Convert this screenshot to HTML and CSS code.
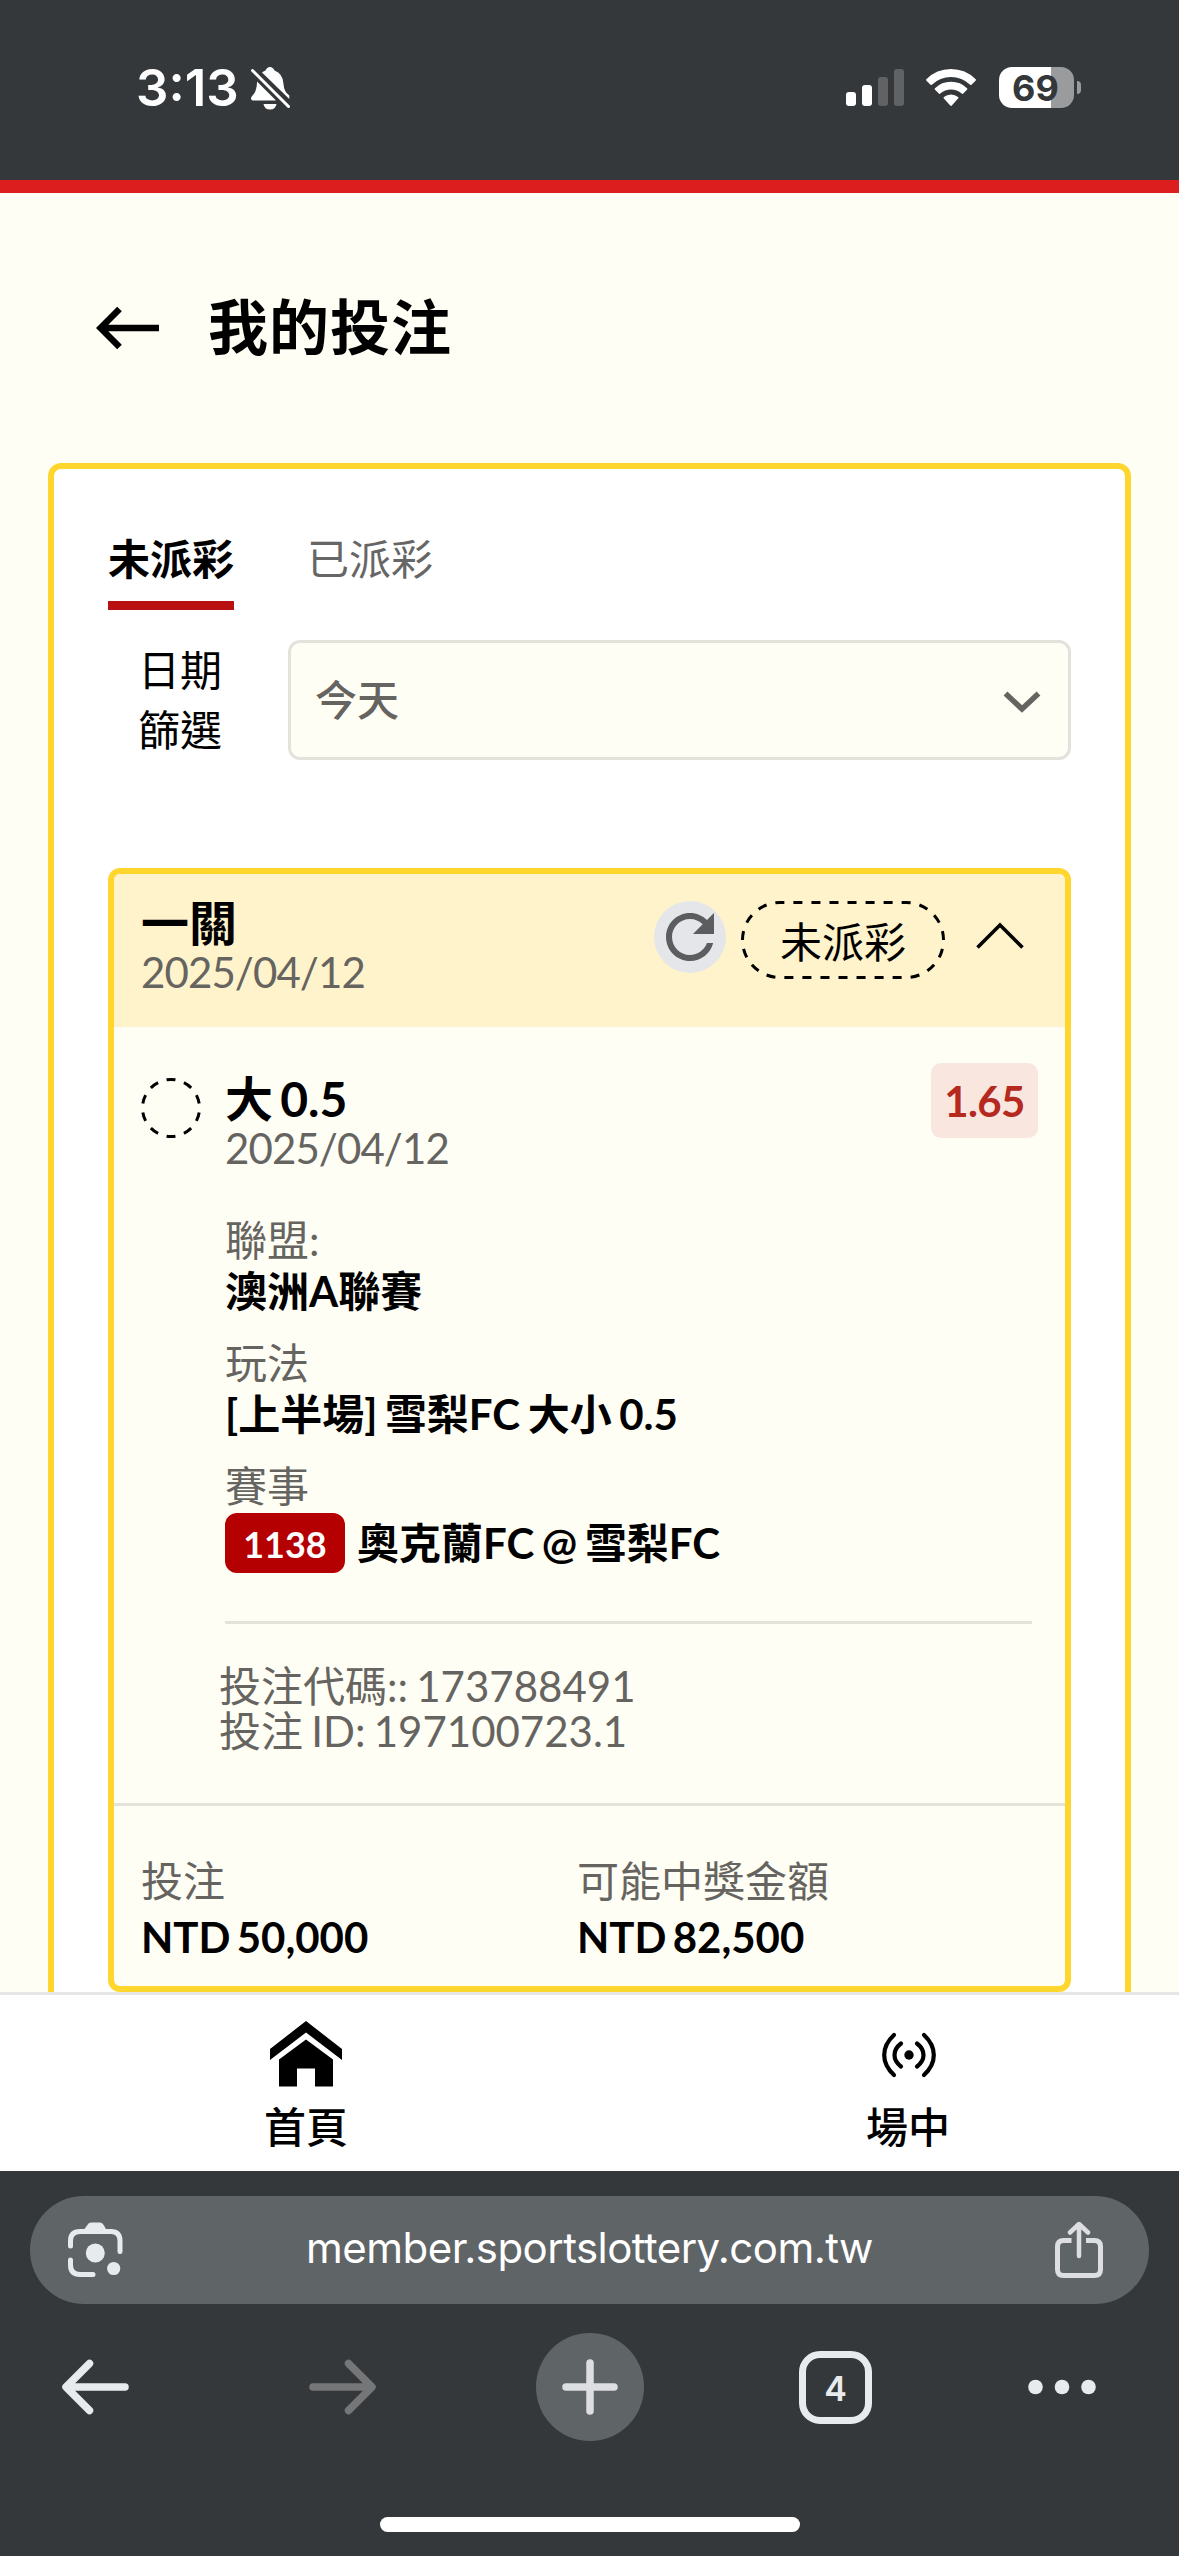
FILE: index.html
```html
<!DOCTYPE html>
<html lang="zh-Hant">
<head>
<meta charset="utf-8">
<title>我的投注</title>
<link rel="stylesheet" href="styles.css">
</head>
<body>
<div class="status-bar">
  <span class="clock">3:13</span>
  <svg class="bell" width="42" height="46" viewBox="0 0 42 46">
    <path fill="#fff" d="M7 17 L7 15.500 L26 34.500 L3 34.500 Q1 34.500 1 32.500 Q1 31 2.500 29.500 Q6.500 26 7 17Z"/>
    <path fill="#fff" d="M12 6.500 Q14 5 15.500 4.500 Q17 1 20 1 Q23 1 24.500 4.500 Q33 7.500 33.500 18 Q34 26 39.300 29.500 V33 Z"/>
    <path fill="#fff" d="M13.500 38 H26.500 Q25.500 43.500 20 43.500 Q14.500 43.500 13.500 38Z"/>
    <path stroke="#fff" stroke-width="3" stroke-linecap="round" d="M2.500 4.500 L38.500 40.500"/>
  </svg>
  <div class="status-icons">
    <svg class="signal" width="60" height="38" viewBox="0 0 60 38">
      <rect x="1" y="23" width="10" height="14" rx="3" fill="#fff"/>
      <rect x="17" y="16" width="10" height="21" rx="3" fill="#fff"/>
      <rect x="33" y="8" width="10" height="29" rx="3" fill="#606264"/>
      <rect x="49" y="0" width="10" height="37" rx="3" fill="#606264"/>
    </svg>
    <svg class="wifi" width="52" height="38" viewBox="0 0 52 38">
      <path fill="#fff" d="M1.200 11.500 Q0.800 10.800 1.300 10.200 Q11.500 0 26 0 Q40.500 0 50.700 10.200 Q51.200 10.800 50.800 11.500 L46.500 15.800 Q45.900 16.300 45.200 15.800 Q37 8 26 8 Q15 8 6.800 15.800 Q6.100 16.300 5.500 15.800Z"/>
      <path fill="#fff" d="M9.800 20.500 Q9.400 19.800 10 19.200 Q16.500 12.800 26 12.800 Q35.500 12.800 42 19.200 Q42.600 19.800 42.200 20.500 L38 24.700 Q37.300 25.100 36.700 24.600 Q32 20.500 26 20.500 Q20 20.500 15.300 24.600 Q14.700 25.100 14 24.700Z"/>
      <path fill="#fff" d="M18.700 29.300 Q18.300 28.600 18.900 28.100 Q22 25.500 26 25.500 Q30 25.500 33.100 28.100 Q33.700 28.600 33.300 29.300 L26.800 36.500 Q26 37.300 25.200 36.500Z"/>
    </svg>
    <div class="battery"><span class="battery-body">69</span><span class="battery-cap"></span></div>
  </div>
</div>

<main class="page">
  <header class="page-header">
    <svg width="64" height="44" viewBox="0 0 64 44">
      <path fill="none" stroke="#000" stroke-width="6.500" d="M63 22 H5 M23.500 3 L4.500 22 L23.500 41"/>
    </svg>
    <h1>我的投注</h1>
  </header>

  <section class="panel">
    <nav class="tabs">
      <a class="tab tab-active">未派彩</a>
      <a class="tab">已派彩</a>
    </nav>
    <div class="filter">
      <label class="filter-label">日期<br>篩選</label>
      <div class="select">
        <span>今天</span>
        <svg width="40" height="26" viewBox="0 0 40 26">
          <path fill="none" stroke="#666460" stroke-width="5.500" d="M3.500 6.500 L20 22 L36.500 6.500"/>
        </svg>
      </div>
    </div>

    <article class="ticket">
      <header class="ticket-header">
        <div class="ticket-title">
          <h2>一關</h2>
          <p class="date">2025/04/12</p>
        </div>
        <div class="ticket-actions">
          <span class="refresh">
            <svg width="72" height="72" viewBox="0 0 24 24">
              <path fill="#5c5d5e" d="M17.650 6.350C16.200 4.900 14.210 4 12 4c-4.420 0-7.990 3.580-7.990 8s3.570 8 7.990 8c3.730 0 6.840-2.550 7.730-6h-2.080c-.82 2.330-3.040 4-5.650 4-3.310 0-6-2.690-6-6s2.690-6 6-6c1.660 0 3.140.69 4.220 1.780L13 11h7V4l-2.350 2.350z"/>
            </svg>
          </span>
          <span class="status-pill">
            <svg class="pill-outline" width="204" height="78" viewBox="0 0 204 78">
              <path fill="none" stroke="#000" stroke-width="3" pathLength="27" stroke-dasharray=".5 .5" stroke-dashoffset="-.25" d="M102 1.500 H165 A37.500 37.500 0 0 1 165 76.500 H39 A37.500 37.500 0 0 1 39 1.500 Z"/>
            </svg>
            未派彩
          </span>
          <svg class="collapse" width="48" height="28" viewBox="0 0 48 28">
            <path fill="none" stroke="#000" stroke-width="3.600" d="M1.500 25.500 L24 3 L46.500 25.500"/>
          </svg>
        </div>
      </header>

      <div class="leg">
        <svg class="leg-status" width="60" height="60" viewBox="0 0 60 60">
          <path fill="none" stroke="#000" stroke-width="3" pathLength="10" stroke-dasharray=".5 .5" stroke-dashoffset=".25" d="M30 1.500 A28.500 28.500 0 0 1 30 58.500 A28.500 28.500 0 0 1 30 1.500"/>
        </svg>
        <div class="leg-body">
          <div class="leg-top">
            <div>
              <h3>大 0.5</h3>
              <p class="date">2025/04/12</p>
            </div>
            <span class="odds">1.65</span>
          </div>
          <dl class="details">
            <dt>聯盟:</dt>
            <dd>澳洲A聯賽</dd>
            <dt>玩法</dt>
            <dd>[上半場] 雪梨FC 大小 0.5</dd>
            <dt>賽事</dt>
            <dd class="match"><span class="match-code">1138</span>奧克蘭FC @ 雪梨FC</dd>
          </dl>
          <div class="meta">
            <p>投注代碼:: 173788491</p>
            <p>投注 ID: 197100723.1</p>
          </div>
        </div>
      </div>

      <footer class="totals">
        <div>
          <p class="total-label">投注</p>
          <p class="total-value">NTD 50,000</p>
        </div>
        <div>
          <p class="total-label">可能中獎金額</p>
          <p class="total-value">NTD 82,500</p>
        </div>
      </footer>
    </article>
  </section>
</main>

<nav class="site-nav">
  <a class="site-nav-item">
    <svg width="72" height="72" viewBox="0 0 72 72">
      <path d="M36 3 L72 31 V42 L36 14.500 L0 42 V31Z"/>
      <path d="M36 21.500 L63 41.500 V68.500 H45 V50.500 H27 V68.500 H9 V41.500Z"/>
    </svg>
    <span>首頁</span>
  </a>
  <a class="site-nav-item">
    <svg width="72" height="72" viewBox="0 0 72 72">
      <circle cx="37" cy="37" r="4.700"/>
      <path fill="none" stroke="#000" stroke-width="4.200" stroke-linecap="round" d="M22 17 Q12.200 26 12.200 37 Q12.200 48 22 57 M52 17 Q61.800 26 61.800 37 Q61.800 48 52 57 M29 25.500 Q22.500 30.500 22.500 37 Q22.500 43.500 29 48.500 M45 25.500 Q51.500 30.500 51.500 37 Q51.500 43.500 45 48.500"/>
    </svg>
    <span>場中</span>
  </a>
</nav>

<div class="browser">
  <div class="address-bar">
    <svg width="56" height="56" viewBox="0 0 56 56">
      <g fill="none" stroke="#e8ebed" stroke-width="5" stroke-linecap="round">
        <path d="M2.500 24 V19 Q2.500 9.500 12 9.500 H43 Q52 9.500 52 19 V29.500"/>
        <path d="M2.500 38 V43 Q2.500 52.500 12 52.500 H25"/>
      </g>
      <g fill="#e8ebed">
        <path d="M15 9 L19 3.500 Q20.500 .5 23 .5 H32 Q34.500 .5 36 3.500 L39 9Z"/>
        <circle cx="27.300" cy="31" r="9.500"/>
        <circle cx="45.700" cy="46.500" r="6.600"/>
      </g>
    </svg>
    <span class="url">member.sportslottery.com.tw</span>
    <svg width="48" height="58" viewBox="0 0 48 58">
      <path fill="none" stroke="#dcdee2" stroke-width="5" d="M16.500 19.500 H8.500 Q2.500 19.500 2.500 25.500 V48.500 Q2.500 54.500 8.500 54.500 H39.500 Q45.500 54.500 45.500 48.500 V25.500 Q45.500 19.500 39.500 19.500 H31"/>
      <path fill="none" stroke="#dcdee2" stroke-width="4.500" stroke-linecap="round" stroke-linejoin="round" d="M24 35 V4 M15 11.500 L24 3 L33 11.500"/>
    </svg>
  </div>
  <div class="toolbar">
    <svg width="68" height="56" viewBox="0 0 68 56">
      <path fill="none" stroke="#e8ebed" stroke-width="7.500" stroke-linecap="round" stroke-linejoin="round" d="M63 28 H5 M27.500 4.500 L4 28 L27.500 51.500"/>
    </svg>
    <svg width="68" height="56" viewBox="0 0 68 56">
      <path fill="none" stroke="#757678" stroke-width="7.500" stroke-linecap="round" stroke-linejoin="round" d="M5 28 H63 M40.500 4.500 L64 28 L40.500 51.500"/>
    </svg>
    <span class="new-tab">
      <svg width="56" height="56" viewBox="0 0 56 56">
        <path stroke="#dcdee2" stroke-width="7.500" stroke-linecap="round" d="M28 4 V52 M4 28 H52"/>
      </svg>
    </span>
    <span class="tab-count">4</span>
    <svg width="68" height="16" viewBox="0 0 68 16">
      <g fill="#e8ebed"><circle cx="7.500" cy="8" r="7.300"/><circle cx="34" cy="8" r="7.300"/><circle cx="60.500" cy="8" r="7.300"/></g>
    </svg>
  </div>
  <div class="home-indicator"></div>
</div>
</body>
</html>
```
FILE: styles.css
```css
* {
  box-sizing: border-box;
  margin: 0;
  padding: 0;
}

body {
  width: 1179px;
  height: 2556px;
  overflow: hidden;
  display: flex;
  flex-direction: column;
  background: #fffef5;
  color: #000;
  font-family: Lato, "Noto Sans CJK TC", sans-serif;
  font-size: 42px;
  line-height: 42px;
  word-spacing: -2.5px;
}

svg {
  display: block;
  flex: none;
}

/* Phone status bar */
.status-bar {
  flex: none;
  height: 193px;
  padding: 66px 98px 0 136px;
  display: flex;
  align-items: flex-start;
  background: #34383a;
  border-bottom: 13px solid #dc1e1e;
  color: #fff;
  font-family: Inter, sans-serif;
}

.clock {
  width: 114px;
  font-size: 51px;
  font-weight: 600;
  line-height: 44px;
}

.status-icons {
  margin-left: auto;
  padding-top: 1px;
  display: flex;
}

.signal {
  margin: 2px 20px 0 0;
}

.wifi {
  margin: 2px 22px 0 0;
}

.battery {
  display: flex;
  align-items: center;
  gap: 3px;
}

.battery-body {
  width: 75px;
  height: 41px;
  border-radius: 13px;
  background: linear-gradient(to right, #fff 52px, #9a9b9d 52px);
  color: #34383a;
  font-size: 36px;
  font-weight: 700;
  line-height: 42px;
  text-align: center;
  padding-right: 2px;
}

.battery-cap {
  width: 4px;
  height: 13px;
  border-radius: 0 4px 4px 0;
  background: #9a9b9d;
}

/* Page */
.page {
  height: 1799px;
  flex: none;
  overflow: hidden;
}

.page-header {
  height: 270px;
  padding-left: 96px;
  display: flex;
  align-items: center;
  gap: 48px;
}

.page-header h1 {
  padding-bottom: 3px;
  font-size: 60px;
  font-weight: 600;
  line-height: 60px;
  letter-spacing: 1px;
}

.panel {
  height: 1600px;
  margin: 0 48px;
  padding: 72px 54px 0;
  border: 6px solid #ffd62e;
  border-radius: 13px;
  background: #fff;
}

.tabs {
  display: flex;
  gap: 73px;
}

.tab {
  height: 69px;
  line-height: 36px;
  color: #666;
}

.tab-active {
  border-bottom: 9px solid #b91012;
  color: #000;
  font-weight: 600;
}

.filter {
  margin-top: 30px;
  display: flex;
}

.filter-label {
  width: 180px;
  padding-right: 36px;
  line-height: 60px;
  text-align: center;
}

.select {
  flex: 1;
  height: 120px;
  padding: 0 26px 0 24px;
  border: 3px solid #e5e2dc;
  border-radius: 12px;
  display: flex;
  align-items: center;
  justify-content: space-between;
  background: #fffef5;
  color: #666460;
  font-weight: 500;
}

/* Bet ticket */
.ticket {
  height: 1124px;
  margin-top: 108px;
  border: 6px solid #ffd62e;
  border-radius: 12px;
  background: #fffef5;
}

.ticket-header {
  height: 153px;
  padding: 27px 41px 0 27px;
  display: flex;
  justify-content: space-between;
  border-radius: 6px 6px 0 0;
  background: #fff3cc;
}

h2,
h3 {
  font-size: 48px;
  line-height: 48px;
  font-weight: 700;
}

h2 {
  margin-top: -2px;
}

.date {
  margin-top: 4px;
  color: #666460;
  letter-spacing: -0.9px;
}

.ticket-actions {
  display: flex;
  align-items: flex-start;
}

.refresh {
  width: 72px;
  height: 72px;
  margin-right: 15px;
  border-radius: 50%;
  background: #e5e6e9;
}

.status-pill {
  position: relative;
  width: 204px;
  height: 78px;
  line-height: 82px;
  text-align: center;
}

.pill-outline {
  position: absolute;
  inset: 0;
}

.collapse {
  margin: 21px 0 0 31px;
}

.leg {
  height: 776px;
  padding: 36px 27px 0 27px;
  display: flex;
  gap: 24px;
}

.leg-status {
  margin-top: 15px;
}

.leg-body {
  flex: 1;
}

.leg-top {
  height: 156px;
  padding-top: 12px;
  display: flex;
  justify-content: space-between;
}

h3 {
  word-spacing: -4.5px;
}

.odds {
  width: 107px;
  height: 75px;
  margin-top: -12px;
  border-radius: 10px;
  background: #f8e6df;
  color: #b5291f;
  font-weight: 700;
  line-height: 77px;
  letter-spacing: -0.6px;
  text-align: center;
}

.details {
  height: 405px;
  margin-right: 6px;
  border-bottom: 3px solid #e5e2dc;
}

.details dt {
  color: #666460;
}

.details dd {
  margin: 9px 0 30px;
  font-weight: 700;
  word-spacing: -2.7px;
}

.details .match {
  height: 60px;
  margin: 6px 0 0;
  display: flex;
  align-items: center;
  gap: 12px;
  line-height: 68px;
}

.match-code {
  width: 120px;
  height: 60px;
  border-radius: 12px;
  background: #b40000;
  color: #fff;
  font-size: 36px;
  font-weight: 700;
  line-height: 62px;
  text-align: center;
}

.meta {
  margin: 40px 0 0 -6px;
  line-height: 45px;
  color: #666460;
}

.totals {
  padding: 54px 27px 0;
  border-top: 3px solid #e5e2dc;
  display: grid;
  grid-template-columns: 436px 1fr;
}

.total-label {
  color: #666460;
}

.total-value {
  margin-top: 14px;
  font-weight: 700;
  word-spacing: -4px;
}

/* Site navigation */
.site-nav {
  flex: none;
  height: 179px;
  padding: 23px 0 0 246px;
  display: flex;
  gap: 482px;
  border-top: 3px solid #e6e6e6;
  background: #fff;
  font-weight: 500;
}

.site-nav-item {
  width: 120px;
  display: flex;
  flex-direction: column;
  align-items: center;
  gap: 16px;
}

/* Browser controls */
.browser {
  flex: none;
  height: 385px;
  padding: 25px 30px 0;
  background: #34383a;
}

.address-bar {
  height: 108px;
  padding: 0 46px 0 38px;
  border-radius: 54px;
  display: flex;
  align-items: center;
  justify-content: space-between;
  background: #5f6467;
}

.url {
  padding-bottom: 4px;
  color: #fff;
  font-family: Inter, sans-serif;
  font-size: 42px;
  line-height: 42px;
  letter-spacing: -0.55px;
}

.toolbar {
  height: 108px;
  margin-top: 29px;
  padding-left: 32px;
  display: grid;
  grid-template-columns: 246px 228px 263px 229px 68px;
  align-items: center;
}

.new-tab {
  width: 108px;
  height: 108px;
  border-radius: 50%;
  display: grid;
  place-items: center;
  background: #5f6467;
}

.tab-count {
  width: 73px;
  height: 73px;
  border: 7px solid #e8ebed;
  border-radius: 21px;
  color: #e8ebed;
  font-family: Inter, sans-serif;
  font-size: 34px;
  font-weight: 600;
  line-height: 61px;
  text-align: center;
}

.home-indicator {
  width: 420px;
  height: 15px;
  margin: 76px auto 0;
  border-radius: 8px;
  background: #fff;
}
```
